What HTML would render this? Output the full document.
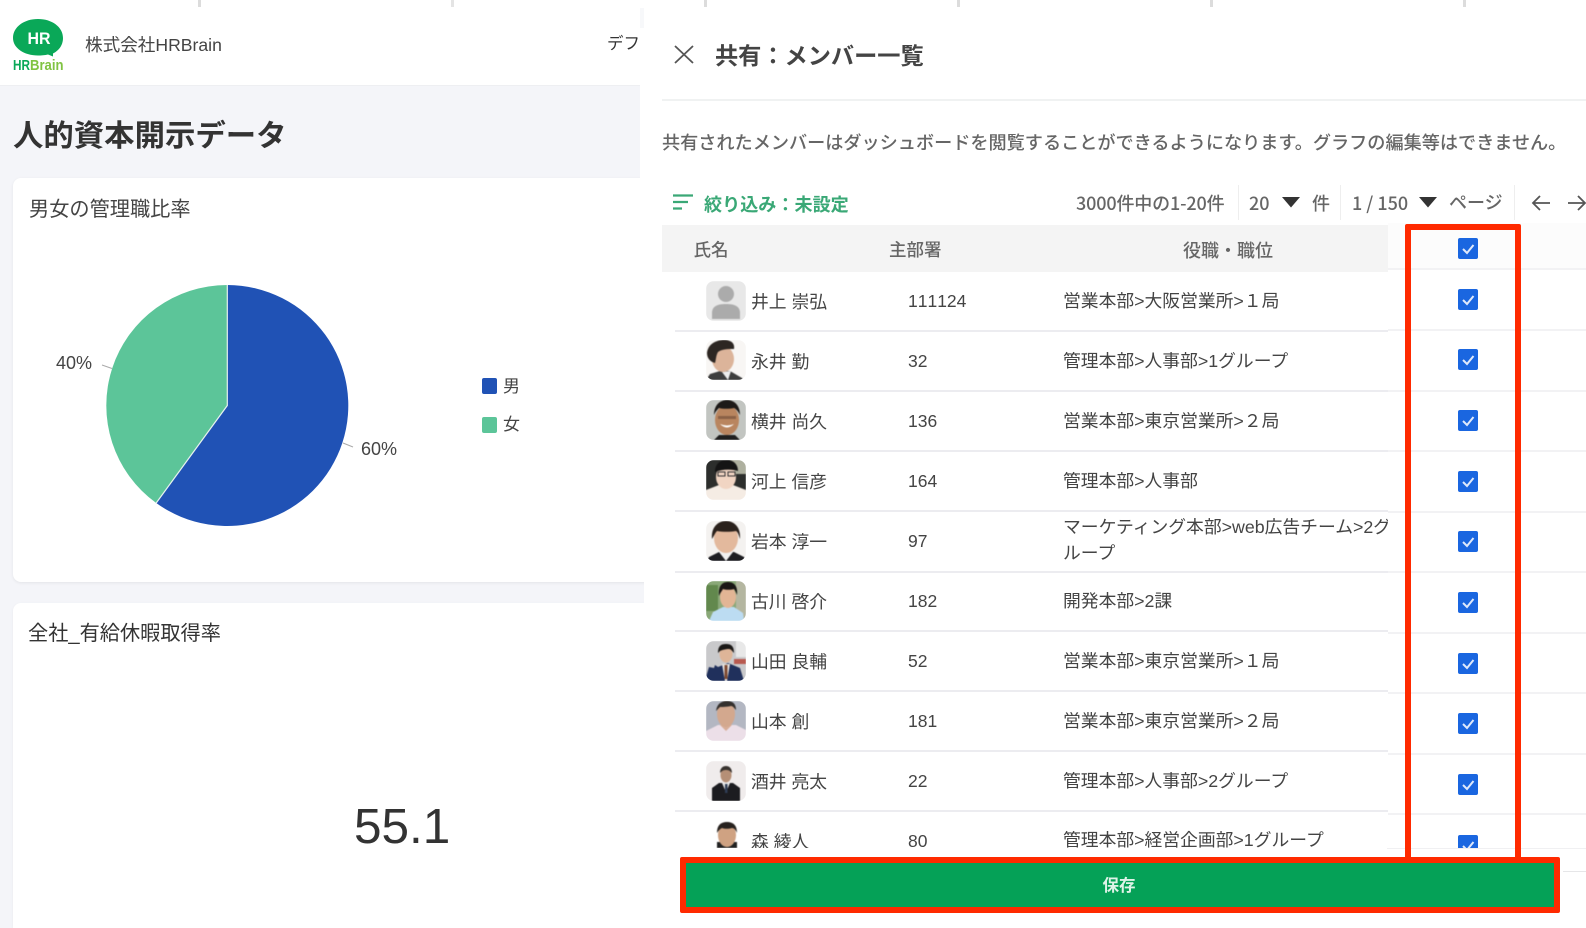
<!DOCTYPE html>
<html lang="ja">
<head>
<meta charset="utf-8">
<title>人的資本開示データ</title>
<style>
html,body{margin:0;padding:0;background:#f4f5f9;width:1586px;height:928px;overflow:hidden;}
body{font-family:"Liberation Sans","Noto Sans CJK JP",sans-serif;color:#444;}
#w{position:absolute;left:0;top:0;width:1586px;height:928px;overflow:hidden;background:#f4f5f9;}
.a{position:absolute;}
.t{position:absolute;white-space:nowrap;line-height:24px;height:24px;}
.n{font-size:17.800px;color:#444;left:751px;}
.d{font-size:17.500px;color:#444;left:908px;font-kerning:none;}
.r{font-size:17.800px;color:#444;left:1063px;}
.h{font-size:17.500px;color:#666;font-weight:500;font-family:"Noto Sans CJK JP",sans-serif;}
.tb{font-size:18px;color:#666;font-weight:500;font-family:"Noto Sans CJK JP",sans-serif;}
.l{position:absolute;height:2px;background:#ececf0;}
.av{position:absolute;left:706px;width:40px;height:40px;border-radius:8px;overflow:hidden;}
.av svg{display:block;filter:blur(.5px);}
.cb{position:absolute;left:1458px;width:20px;height:21px;}
.sep{position:absolute;top:185px;width:1px;height:35px;background:#eee;}
</style>
</head>
<body>
<div id="w">
<!-- header -->
<div class="a" style="left:0;top:0;width:1586px;height:85px;background:#fff;border-bottom:1px solid #eeeff2;"></div>
<div class="a" style="left:198px;top:0;width:3px;height:7px;background:#dcdcdc;"></div>
<div class="a" style="left:451px;top:0;width:3px;height:7px;background:#e4e4e4;"></div>
<svg class="a" style="left:10px;top:15px;" width="60" height="60" viewBox="0 0 60 60">
  <path d="M3 23C3 12 14 4 28 4s25 8 25 19c0 8-5 13-10 15.500l0 3-5-2c-3 .8-7 1-10 1C14 40.500 3 33 3 23z" fill="#0aa858"/>
  <text x="29" y="29" text-anchor="middle" font-family="Liberation Sans,sans-serif" font-weight="700" font-size="17" textLength="23" lengthAdjust="spacingAndGlyphs" fill="#fff">HR</text>
  <text x="3" y="55" font-family="Liberation Sans,sans-serif" font-weight="700" font-size="14.500" textLength="17" lengthAdjust="spacingAndGlyphs" fill="#0aa858">HR</text>
  <text x="20" y="55" font-family="Liberation Sans,sans-serif" font-weight="700" font-size="14.500" textLength="33.500" lengthAdjust="spacingAndGlyphs" fill="#80c342">Brain</text>
</svg>
<div class="t" style="left:85px;top:33px;font-size:17.600px;color:#444;">株式会社HRBrain</div>
<div class="t" style="left:607px;top:32px;font-size:16.500px;color:#333;">デフォルト</div>

<div class="t" style="left:13px;top:120px;height:32px;line-height:32px;font-size:30.400px;font-weight:700;color:#333;">人的資本開示データ</div>

<!-- card 1 -->
<div class="a" style="left:13px;top:178px;width:660px;height:404px;background:#fff;border-radius:8px;box-shadow:0 1px 3px rgba(0,0,0,.07);"></div>
<div class="t" style="left:29px;top:198px;font-size:20.200px;color:#444;">男女の管理職比率</div>
<svg class="a" style="left:0;top:240px;" width="640" height="340" viewBox="0 240 640 340">
  <path d="M227.300 405.500 L227.300 285 A121 120.500 0 1 1 156.200 503 Z" fill="#2052b5"/>
  <path d="M227.300 405.500 L156.200 503 A121 120.500 0 0 1 227.300 285 Z" fill="#5cc599"/>
  <path d="M227.300 285 L227.300 405.500 L156.200 503" fill="none" stroke="#e6f2ee" stroke-width="1.200"/>
  <path d="M102 365 L112 368.500" stroke="#aaa" stroke-width="1" fill="none"/>
  <path d="M343 443 L353 447" stroke="#aaa" stroke-width="1" fill="none"/>
  <rect x="482" y="378" width="15" height="16" rx="2" fill="#2052b5"/>
  <rect x="482" y="417" width="15" height="16" rx="2" fill="#5cc599"/>
</svg>
<div class="t" style="left:56px;top:351px;font-size:18px;color:#444;">40%</div>
<div class="t" style="left:361px;top:437px;font-size:18px;color:#444;">60%</div>
<div class="t" style="left:503px;top:375px;font-size:17px;color:#444;">男</div>
<div class="t" style="left:503px;top:413px;font-size:17px;color:#444;">女</div>

<!-- card 2 -->
<div class="a" style="left:13px;top:603px;width:660px;height:325px;background:#fff;border-radius:8px 8px 0 0;box-shadow:0 1px 3px rgba(0,0,0,.05);"></div>
<div class="t" style="left:28px;top:622px;font-size:20.200px;color:#333;">全社_有給休暇取得率</div>
<div class="t" style="left:354px;top:796px;height:62px;line-height:62px;font-size:49.500px;color:#333;">55.1</div>

<!-- panel -->
<div class="a" style="left:640px;top:8px;width:4px;height:20px;background:#f7f8fa;"></div>
<div class="a" style="left:640px;top:28px;width:946px;height:245px;background:#fff;"></div>
<div class="a" style="left:644px;top:8px;width:942px;height:920px;background:#fff;"></div>
<div class="a" style="left:640px;top:0;width:946px;height:8px;background:#fff;"></div>
<div class="a" style="left:704px;top:0;width:3px;height:7px;background:#dcdcdc;"></div>
<div class="a" style="left:957px;top:0;width:3px;height:7px;background:#dcdcdc;"></div>
<div class="a" style="left:1210px;top:0;width:3px;height:7px;background:#dcdcdc;"></div>
<div class="a" style="left:1463px;top:0;width:3px;height:7px;background:#dcdcdc;"></div>

<svg class="a" style="left:672px;top:43px;" width="24" height="24" viewBox="0 0 24 24"><path d="M3 3L21 20M21 3L3 20" stroke="#555" stroke-width="1.800" fill="none"/></svg>
<div class="t" style="left:715px;top:41px;height:30px;line-height:30px;font-size:23.200px;font-weight:700;color:#444;">共有：メンバー一覧</div>
<div class="a" style="left:662px;top:99px;width:924px;height:2px;background:#f0f2f2;"></div>
<div class="t h" style="left:662px;top:130px;font-size:18.150px;">共有されたメンバーはダッシュボードを閲覧することができるようになります。グラフの編集等はできません。</div>

<!-- toolbar -->
<svg class="a" style="left:672px;top:192px;" width="22" height="20" viewBox="0 0 22 20"><path d="M1 3.500H21M1 10H16M1 16.500H10" stroke="#3aa876" stroke-width="2.200" fill="none"/></svg>
<div class="t" style="left:704px;top:192px;font-size:18.100px;font-weight:700;color:#3aa876;font-family:'Noto Sans CJK JP',sans-serif;">絞り込み：未設定</div>
<div class="t tb" style="left:1076px;top:191px;letter-spacing:-.15px;">3000件中の1-20件</div>
<div class="sep" style="left:1238px;"></div>
<div class="t tb" style="left:1249px;top:191px;">20</div>
<svg class="a" style="left:1282px;top:197px;" width="18" height="11"><path d="M0 0H18L9 10.500Z" fill="#333"/></svg>
<div class="t tb" style="left:1312px;top:191px;">件</div>
<div class="sep" style="left:1340px;"></div>
<div class="t tb" style="left:1352px;top:191px;">1 / 150</div>
<svg class="a" style="left:1419px;top:197px;" width="18" height="11"><path d="M0 0H18L9 10.500Z" fill="#333"/></svg>
<div class="t tb" style="left:1449px;top:190px;">ページ</div>
<div class="sep" style="left:1514px;"></div>
<svg class="a" style="left:1531px;top:193px;" width="20" height="20" viewBox="0 0 20 20"><path d="M19 10H2M9 3L2 10L9 17" stroke="#555" stroke-width="1.800" fill="none"/></svg>
<svg class="a" style="left:1567px;top:193px;" width="20" height="20" viewBox="0 0 20 20"><path d="M1 10H18M11 3L18 10L11 17" stroke="#555" stroke-width="1.800" fill="none"/></svg>

<!-- table header -->
<div class="a" style="left:662px;top:225px;width:726px;height:47px;background:#f4f4f4;"></div>
<div class="t h" style="left:693.500px;top:238px;">氏名</div>
<div class="t h" style="left:889px;top:238px;">主部署</div>
<div class="t h" style="left:1183px;top:238px;font-size:18px;">役職・職位</div>

<!-- left table body -->
<div class="a" style="left:0;top:0;width:1388px;height:848px;overflow:hidden;">
  <div class="l" style="left:675px;top:330px;width:713px;"></div>
  <div class="l" style="left:675px;top:390px;width:713px;"></div>
  <div class="l" style="left:675px;top:450px;width:713px;"></div>
  <div class="l" style="left:675px;top:510px;width:713px;"></div>
  <div class="l" style="left:675px;top:571px;width:713px;"></div>
  <div class="l" style="left:675px;top:630px;width:713px;"></div>
  <div class="l" style="left:675px;top:690px;width:713px;"></div>
  <div class="l" style="left:675px;top:750px;width:713px;"></div>
  <div class="l" style="left:675px;top:810px;width:713px;"></div>

  <!-- avatars -->
  <div class="av" style="top:281px;"><svg width="40" height="40" viewBox="0 0 40 40"><rect width="40" height="40" fill="#e8e8e8"/><circle cx="20" cy="13" r="8" fill="#ababab"/><path d="M6 38V32C6 25 12 23 20 23s14 2 14 9v6z" fill="#ababab"/></svg></div>
  <div class="av" style="top:340px;"><svg width="40" height="40" viewBox="0 0 40 40"><rect width="40" height="40" fill="#f8f6f4"/><path d="M0 40L4 34 14 31H24L36 38 38 40z" fill="#3e3e3e"/><path d="M16 32L22 40 25 31z" fill="#eee"/><ellipse cx="17" cy="19" rx="11" ry="13" fill="#dcb49a"/><path d="M1 13C2 4 10 0 18 0s11 4 10 9c-6 0-12 0-16 3-2 3-2 8-3 11C5 22 1 19 1 13z" fill="#2c2622"/></svg></div>
  <div class="av" style="top:400px;"><svg width="40" height="40" viewBox="0 0 40 40"><rect width="40" height="40" fill="#c2c5c1"/><path d="M8 40L13 35H29L34 40z" fill="#1f1f1f"/><ellipse cx="21" cy="20" rx="12" ry="15" fill="#b9855f"/><path d="M8 15C8 5 14 0 21 0s13 5 13 15c-2-4-4-6-6-7-5 1-11 1-15 0-2 2-4 4-5 7z" fill="#1d1a18"/><path d="M14 24Q21 31 28 24Q21 27 14 24z" fill="#fff"/><rect x="12" y="16" width="18" height="3" fill="#6b4a35" opacity=".6"/></svg></div>
  <div class="av" style="top:460px;"><svg width="40" height="40" viewBox="0 0 40 40"><rect width="40" height="40" fill="#2c2e2c"/><rect x="24" width="16" height="14" fill="#aeb09f"/><path d="M0 40V30L13 25H27L40 30V40z" fill="#f5ece4"/><ellipse cx="20" cy="17" rx="10" ry="12" fill="#f1d5c3"/><path d="M9 12C9 4 14 0 21 0s11 5 11 11c-6-2-16-2-23 1z" fill="#141414"/><rect x="12" y="12" width="7" height="4" fill="none" stroke="#333" stroke-width="1"/><rect x="22" y="12" width="7" height="4" fill="none" stroke="#333" stroke-width="1"/></svg></div>
  <div class="av" style="top:521px;"><svg width="40" height="40" viewBox="0 0 40 40"><rect width="40" height="40" fill="#f4f2f0"/><path d="M1 40L3 36 13 31H28L38 36 40 40z" fill="#1e1e22"/><path d="M13 31L20 40 27 31z" fill="#f0f0f0"/><ellipse cx="20" cy="17" rx="12" ry="15" fill="#e3b99d"/><path d="M6 18C5 6 12 0 20 0s15 6 14 18c-1-3-2-7-4-8-6 1-13 1-19 0-2 2-3 5-5 8z" fill="#2a211c"/></svg></div>
  <div class="av" style="top:581px;"><svg width="40" height="40" viewBox="0 0 40 40"><rect width="40" height="40" fill="#8aa878"/><rect x="0" y="4" width="12" height="26" fill="#62884d"/><rect x="30" y="0" width="10" height="40" fill="#b4b6a0"/><path d="M3 40L7 31 17 26H28L37 32 38 40z" fill="#bcdcf2"/><ellipse cx="22" cy="16" rx="8" ry="11" fill="#e2b595"/><path d="M13 15C12 5 16 1 22 1s10 4 9 13c-1-3-2-5-3-6-3 1-8 1-11 0-1 2-3 4-4 7z" fill="#1a1715"/></svg></div>
  <div class="av" style="top:641px;"><svg width="40" height="40" viewBox="0 0 40 40"><rect width="40" height="40" fill="#c9c9cb"/><rect x="28" y="18" width="12" height="5" fill="#b85a50"/><rect x="30" width="10" height="16" fill="#e8e8e8"/><path d="M0 40V36L3 26 8 27 9 24 12 26 22 22 34 27 38 40z" fill="#20305c"/><path d="M16 23L19 40H21L24 23z" fill="#e6e2de"/><rect x="18.500" y="24" width="3" height="14" fill="#7d4a32"/><ellipse cx="20" cy="13" rx="6.500" ry="8.500" fill="#deb598"/><path d="M12 12C12 5 15 3 20 3s8 2 8 9c-2-2-3-4-5-4-3 0-7 1-9 2z" fill="#1b1917"/></svg></div>
  <div class="av" style="top:701px;"><svg width="40" height="40" viewBox="0 0 40 40"><rect width="40" height="40" fill="#b3b7c2"/><path d="M0 40V30L12 24H30L40 29V40z" fill="#ecdfe8"/><path d="M14 24L20 30 26 24z" fill="#d8ae98"/><ellipse cx="20" cy="13" rx="9" ry="13" fill="#d3a88e"/><path d="M10 10C11 3 15 0 21 0s9 3 9 9c-2-2-3-4-5-4-5 1-9 1-11 1z" fill="#34302d"/></svg></div>
  <div class="av" style="top:761px;"><svg width="40" height="40" viewBox="0 0 40 40"><rect width="40" height="40" fill="#f0ecec"/><path d="M6 40V27L13 22H27L34 27V40z" fill="#1c1c20"/><path d="M16 22L20 31 24 22z" fill="#e6e6e6"/><rect x="19" y="23" width="2.500" height="9" fill="#2f3d55"/><ellipse cx="20" cy="14" rx="5.500" ry="7.500" fill="#b58f76"/><path d="M14 12C14 7 17 5 20 5s6 2 6 7c-2-2-3-3-6-3s-4 1-6 3z" fill="#38332f"/></svg></div>
  <svg class="a" style="left:716px;top:822px;filter:blur(.5px);" width="22" height="26" viewBox="0 0 22 26"><path d="M1 26V20H21V26z" fill="#222"/><ellipse cx="11" cy="13" rx="9" ry="12" fill="#cfa282"/><path d="M1 11C1 3 5 0 11 0s10 3 10 11c-1-3-3-5-5-5-4 1-7 1-10 0-2 1-4 3-5 5z" fill="#27221f"/></svg>

  <!-- names -->
  <div class="t n" style="top:290px;">井上 崇弘</div>
  <div class="t n" style="top:350px;">永井 勤</div>
  <div class="t n" style="top:410px;">横井 尚久</div>
  <div class="t n" style="top:470px;">河上 信彦</div>
  <div class="t n" style="top:530px;">岩本 淳一</div>
  <div class="t n" style="top:590px;">古川 啓介</div>
  <div class="t n" style="top:650px;">山田 良輔</div>
  <div class="t n" style="top:710px;">山本 創</div>
  <div class="t n" style="top:770px;">酒井 亮太</div>
  <div class="t n" style="top:830px;">森 綾人</div>

  <!-- numbers -->
  <div class="t d" style="top:289px;">111124</div>
  <div class="t d" style="top:349px;">32</div>
  <div class="t d" style="top:409px;">136</div>
  <div class="t d" style="top:469px;">164</div>
  <div class="t d" style="top:529px;">97</div>
  <div class="t d" style="top:589px;">182</div>
  <div class="t d" style="top:649px;">52</div>
  <div class="t d" style="top:709px;">181</div>
  <div class="t d" style="top:769px;">22</div>
  <div class="t d" style="top:829px;">80</div>

  <!-- roles -->
  <div class="t r" style="top:289px;">営業本部&gt;大阪営業所&gt;１局</div>
  <div class="t r" style="top:349px;">管理本部&gt;人事部&gt;1グループ</div>
  <div class="t r" style="top:409px;">営業本部&gt;東京営業所&gt;２局</div>
  <div class="t r" style="top:469px;">管理本部&gt;人事部</div>
  <div class="t r" style="top:515px;">マーケティング本部&gt;web広告チーム&gt;2グ</div>
  <div class="t r" style="top:541px;">ループ</div>
  <div class="t r" style="top:589px;">開発本部&gt;2課</div>
  <div class="t r" style="top:649px;">営業本部&gt;東京営業所&gt;１局</div>
  <div class="t r" style="top:709px;">営業本部&gt;東京営業所&gt;２局</div>
  <div class="t r" style="top:769px;">管理本部&gt;人事部&gt;2グループ</div>
  <div class="t r" style="top:828px;">管理本部&gt;経営企画部&gt;1グループ</div>
</div>

<!-- right column -->
<div class="a" style="left:1388px;top:223px;width:198px;height:46px;background:#fcfcfc;"></div>
<div class="a" style="left:0;top:0;width:1586px;height:848px;overflow:hidden;">
  <div class="l" style="left:1388px;top:268px;width:198px;background:#f2f2f4;"></div>
  <div class="l" style="left:1388px;top:329px;width:198px;background:#f2f2f4;"></div>
  <div class="l" style="left:1388px;top:390px;width:198px;background:#f2f2f4;"></div>
  <div class="l" style="left:1388px;top:450px;width:198px;background:#f2f2f4;"></div>
  <div class="l" style="left:1388px;top:511px;width:198px;background:#f2f2f4;"></div>
  <div class="l" style="left:1388px;top:571px;width:198px;background:#f2f2f4;"></div>
  <div class="l" style="left:1388px;top:632px;width:198px;background:#f2f2f4;"></div>
  <div class="l" style="left:1388px;top:692px;width:198px;background:#f2f2f4;"></div>
  <div class="l" style="left:1388px;top:753px;width:198px;background:#f2f2f4;"></div>
  <div class="l" style="left:1388px;top:813px;width:198px;background:#f2f2f4;"></div>
  <svg class="cb" style="top:238px;" viewBox="0 0 20 21"><rect width="20" height="21" rx="2" fill="#1a66e0"/><path d="M5 11L9 15L15.500 7" stroke="#dfe9fb" stroke-width="2" fill="none"/></svg>
  <svg class="cb" style="top:289px;" viewBox="0 0 20 21"><rect width="20" height="21" rx="2" fill="#1a66e0"/><path d="M5 11L9 15L15.500 7" stroke="#dfe9fb" stroke-width="2" fill="none"/></svg>
  <svg class="cb" style="top:349px;" viewBox="0 0 20 21"><rect width="20" height="21" rx="2" fill="#1a66e0"/><path d="M5 11L9 15L15.500 7" stroke="#dfe9fb" stroke-width="2" fill="none"/></svg>
  <svg class="cb" style="top:410px;" viewBox="0 0 20 21"><rect width="20" height="21" rx="2" fill="#1a66e0"/><path d="M5 11L9 15L15.500 7" stroke="#dfe9fb" stroke-width="2" fill="none"/></svg>
  <svg class="cb" style="top:471px;" viewBox="0 0 20 21"><rect width="20" height="21" rx="2" fill="#1a66e0"/><path d="M5 11L9 15L15.500 7" stroke="#dfe9fb" stroke-width="2" fill="none"/></svg>
  <svg class="cb" style="top:531px;" viewBox="0 0 20 21"><rect width="20" height="21" rx="2" fill="#1a66e0"/><path d="M5 11L9 15L15.500 7" stroke="#dfe9fb" stroke-width="2" fill="none"/></svg>
  <svg class="cb" style="top:592px;" viewBox="0 0 20 21"><rect width="20" height="21" rx="2" fill="#1a66e0"/><path d="M5 11L9 15L15.500 7" stroke="#dfe9fb" stroke-width="2" fill="none"/></svg>
  <svg class="cb" style="top:653px;" viewBox="0 0 20 21"><rect width="20" height="21" rx="2" fill="#1a66e0"/><path d="M5 11L9 15L15.500 7" stroke="#dfe9fb" stroke-width="2" fill="none"/></svg>
  <svg class="cb" style="top:713px;" viewBox="0 0 20 21"><rect width="20" height="21" rx="2" fill="#1a66e0"/><path d="M5 11L9 15L15.500 7" stroke="#dfe9fb" stroke-width="2" fill="none"/></svg>
  <svg class="cb" style="top:774px;" viewBox="0 0 20 21"><rect width="20" height="21" rx="2" fill="#1a66e0"/><path d="M5 11L9 15L15.500 7" stroke="#dfe9fb" stroke-width="2" fill="none"/></svg>
  <svg class="cb" style="top:835px;" viewBox="0 0 20 21"><rect width="20" height="21" rx="2" fill="#1a66e0"/><path d="M5 11L9 15L15.500 7" stroke="#dfe9fb" stroke-width="2" fill="none"/></svg>
</div>
<div class="a" style="left:1387px;top:848px;width:199px;height:1px;background:#f0f0f2;"></div>
<div class="a" style="left:1563px;top:871px;width:23px;height:1px;background:#e6e6e8;"></div>

<!-- red highlight: column -->
<div class="a" style="left:1405px;top:224px;width:104px;height:631px;border:6px solid #ff2a00;border-radius:2px;"></div>

<!-- save button -->
<div class="a" style="left:680px;top:857px;width:868px;height:44px;border:6px solid #ff2a00;border-radius:2px;background:#05a157;color:#dff3e8;font-size:16.500px;font-weight:700;line-height:46px;text-align:center;">
  <span style="position:relative;left:-1px;">保存</span>
</div>
</div>
</body>
</html>
